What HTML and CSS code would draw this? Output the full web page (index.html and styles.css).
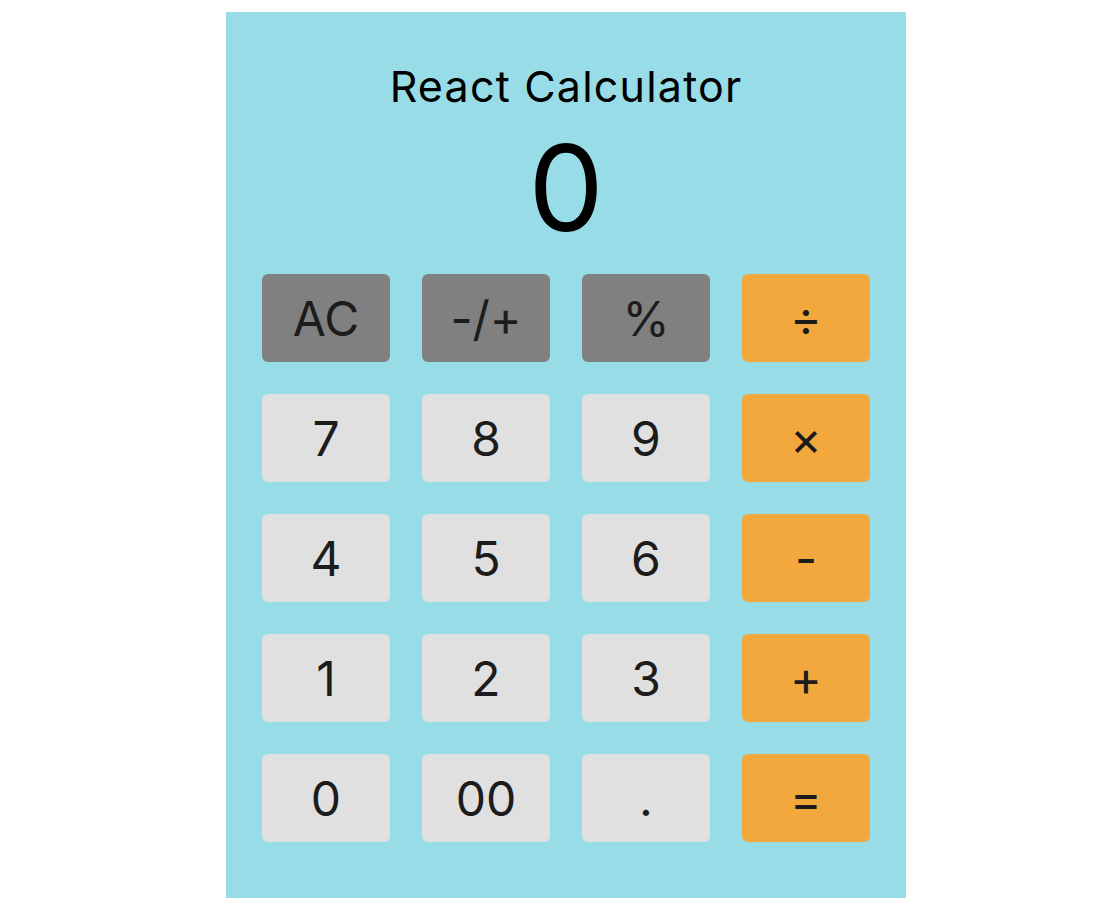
FILE: index.html
```html
<!DOCTYPE html>
<html>
<head>
<meta charset="utf-8">
<link rel="stylesheet" href="styles.css">
</head>
<body>
<div class="calculator">
  <h1 class="title">React Calculator</h1>
  <div class="display">0</div>
  <div class="keys">
    <button class="key key-fn">AC</button>
    <button class="key key-fn">-/+</button>
    <button class="key key-fn">%</button>
    <button class="key key-op">÷</button>
    <button class="key">7</button>
    <button class="key">8</button>
    <button class="key">9</button>
    <button class="key key-op">×</button>
    <button class="key">4</button>
    <button class="key">5</button>
    <button class="key">6</button>
    <button class="key key-op">-</button>
    <button class="key">1</button>
    <button class="key">2</button>
    <button class="key">3</button>
    <button class="key key-op">+</button>
    <button class="key">0</button>
    <button class="key">00</button>
    <button class="key">.</button>
    <button class="key key-op">=</button>
  </div>
</div>
</body>
</html>
```
FILE: styles.css
```css
html, body {
  margin: 0;
  padding: 0;
  background: #ffffff;
}
body {
  padding-left: 26px;
  font-family: Inter, Roboto, sans-serif;
}
.calculator {
  width: 680px;
  margin: 12px auto 0;
  padding: 49px 36px 56px;
  box-sizing: border-box;
  background: #97dce7;
  display: flex;
  flex-direction: column;
  align-items: center;
}
.title {
  margin: 0;
  font-size: 43px;
  line-height: 50px;
  font-weight: 400;
  letter-spacing: 1.2px;
  color: #000;
}
.display {
  margin-top: 17px;
  font-size: 120px;
  line-height: 120px;
  font-weight: 400;
  color: #000;
}
.keys {
  margin-top: 26px;
  display: grid;
  grid-template-columns: repeat(4, 128px);
  grid-auto-rows: 88px;
  gap: 32px;
}
.key {
  border: none;
  border-radius: 6px;
  background: #e0e0e0;
  color: #1c1c1c;
  font-family: Inter, Roboto, sans-serif;
  font-size: 48px;
  padding: 0;
  margin: 0;
}
.key-fn {
  background: #808080;
}
.key-op {
  background: #f2a83c;
}
```
